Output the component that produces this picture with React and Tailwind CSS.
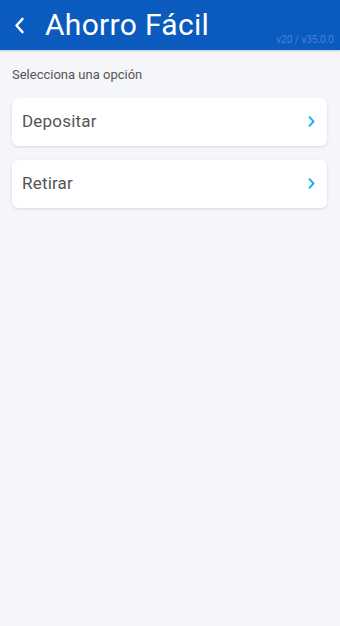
import React from 'react'

const Chevron = ({ className, width = 2 }) => (
    <svg viewBox="0 0 8 14" className={className} fill="none">
        <path d="M1.5 1.5 L6.5 7 L1.5 12.5" stroke="currentColor" strokeWidth={width} strokeLinecap="round" strokeLinejoin="round" />
    </svg>
)

const Option = ({ label }) => (
    <button className="flex h-[48px] w-full items-center justify-between rounded-[6px] bg-white pl-[10px] pr-[12px] text-left shadow-[0_1px_3px_rgba(0,0,0,0.12)]">
        <span className="text-[17px] tracking-[0.2px] text-[#555]">{label}</span>
        <Chevron className="h-[11px] w-[7px] text-[#1aaee8]" width={2.4} />
    </button>
)

export default function App() {
    return (
        <div className="min-h-[626px] bg-[#f5f6fa] font-['Roboto',sans-serif]">
            <header className="relative flex h-[50px] items-center bg-[#0b5bbf] pl-[14px] shadow-[0_1px_2px_rgba(0,0,0,0.2)]">
                <Chevron className="h-[17px] w-[11px] -scale-x-100 text-white" />
                <h1 className="ml-[20px] text-[30px] leading-none tracking-[0.3px] text-white">Ahorro Fácil</h1>
                <span className="absolute bottom-[3px] right-[6px] text-[10px] text-[#4b82d4]">v20 / v35.0.0</span>
            </header>
            <main className="px-[12px] pr-[13px]">
                <p className="pt-[15px] text-[13px] text-[#555]">Selecciona una opción</p>
                <div className="mt-[13px] flex flex-col gap-[14px]">
                    <Option label="Depositar" />
                    <Option label="Retirar" />
                </div>
            </main>
        </div>
    )
}
